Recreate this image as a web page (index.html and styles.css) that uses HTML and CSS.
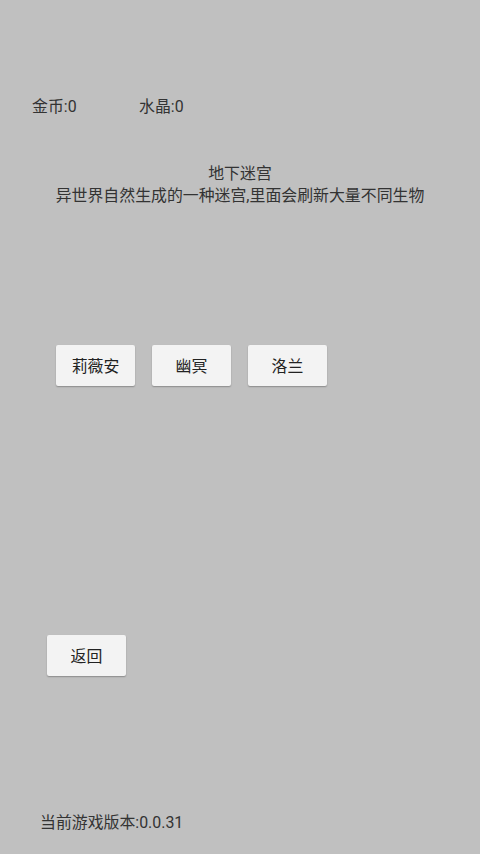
FILE: index.html
```html
<!DOCTYPE html>
<html lang="zh">
<head>
<meta charset="utf-8">
<title>地下迷宫</title>
<link rel="stylesheet" href="styles.css">
</head>
<body>
<div class="screen">
  <div class="stats">
    <span class="stat stat-gold">金币:0</span>
    <span class="stat">水晶:0</span>
  </div>
  <div class="intro">
    <div class="intro-title">地下迷宫</div>
    <div class="intro-desc">异世界自然生成的一种迷宫,里面会刷新大量不同生物</div>
  </div>
  <div class="heroes">
    <button class="btn">莉薇安</button>
    <button class="btn">幽冥</button>
    <button class="btn">洛兰</button>
  </div>
  <div class="back-row">
    <button class="btn">返回</button>
  </div>
  <div class="version">当前游戏版本:0.0.31</div>
</div>
</body>
</html>
```
FILE: styles.css
```css
html, body {
  margin: 0;
  padding: 0;
  background: #c0c0c0;
}

.screen {
  width: 480px;
  height: 854px;
  font-family: Roboto, "Noto Sans CJK SC", sans-serif;
  font-size: 15.9px;
  line-height: 22px;
  color: #333333;
  display: flex;
  flex-direction: column;
}

.stats {
  display: flex;
  margin-top: 96px;
  padding-left: 32px;
}

.stat-gold {
  width: 107px;
}

.intro {
  margin-top: 45px;
  text-align: center;
}

.heroes {
  display: flex;
  gap: 17px;
  margin-top: 138px;
  padding-left: 56px;
}

.btn {
  width: 79px;
  height: 41px;
  padding: 0;
  border: none;
  border-radius: 2px;
  background: #f3f3f3;
  box-shadow: 0 1px 1.5px rgba(0, 0, 0, 0.28);
  font-family: inherit;
  font-size: 15.9px;
  color: #222222;
}

.back-row {
  margin-top: 249px;
  padding-left: 47px;
}

.version {
  margin-top: 136px;
  padding-left: 40px;
}
```
